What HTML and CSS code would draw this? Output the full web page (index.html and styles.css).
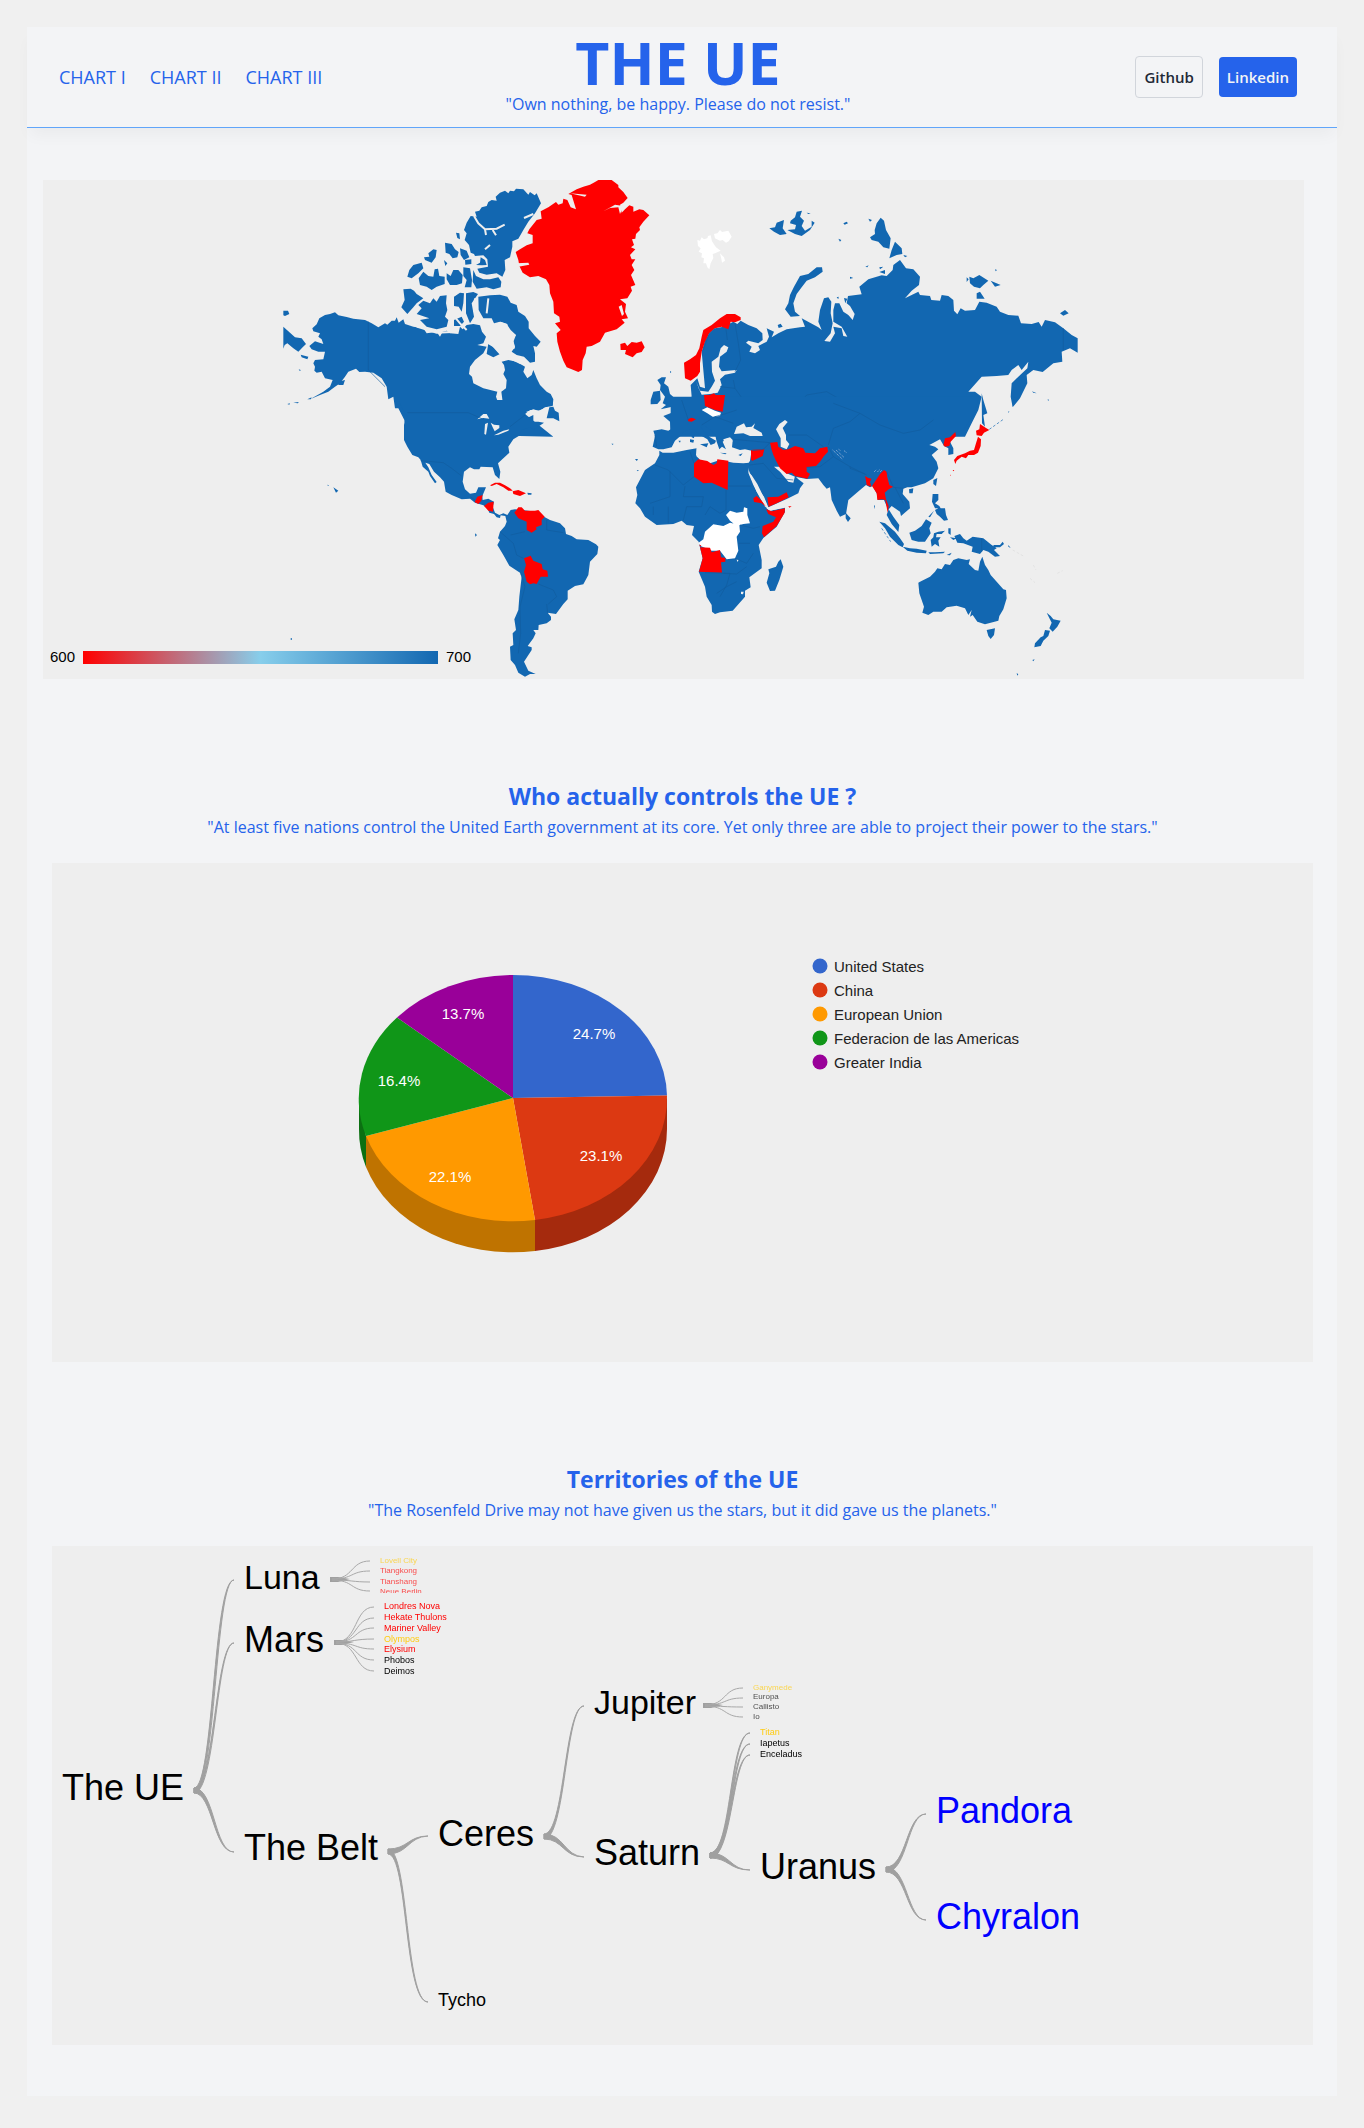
FILE: index.html
```html
<!DOCTYPE html>
<html lang="en">
<head>
<meta charset="utf-8">
<meta name="viewport" content="width=device-width, initial-scale=1">
<title>The UE</title>
<link rel="stylesheet" href="styles.css">
</head>
<body>
<div class="page">
  <header class="header">
    <nav class="nav">
      <a href="#chart1">CHART I</a>
      <a href="#chart2">CHART II</a>
      <a href="#chart3">CHART III</a>
    </nav>
    <div class="brand">
      <h1>THE UE</h1>
      <p class="quote">"Own nothing, be happy. Please do not resist."</p>
    </div>
    <div class="actions">
      <button type="button" class="btn btn-outline">Github</button>
      <button type="button" class="btn btn-solid">Linkedin</button>
    </div>
  </header>

  <main>
    <section class="map-section" id="chart1">
      <div class="panel map-panel">
        <svg class="chart" viewBox="-681 30 3783 1497" role="img" aria-label="World map">
          <!-- North America, Arctic -->
          <g class="land">
            <path d="M813,100 800,70 794,76 780,66 775,74 760,58 738,56 732,64 720,62 715,70 705,62 690,68 677,80 680,92 665,90 655,96 650,108 635,112 628,122 615,125 620,140 602,138 590,158 582,180 590,190 584,210 597,225 602,248 612,252 615,258 640,256 652,268 654,290 622,296 628,308 650,314 680,310 697,320 706,300 704,270 720,262 727,230 727,214 745,206 760,180 775,155 795,130Z"/>
            <path d="M610,300 618,318 640,328 660,328 685,322 694,335 692,352 670,358 650,352 620,356 608,335Z"/>
            <path d="M525,218 545,222 555,238 566,246 562,262 548,265 538,252 527,248ZM570,235 590,242 598,262 582,270 572,255ZM558,188 568,190 570,208 562,204ZM475,250 490,238 500,240 497,262 485,278 465,270 462,262 478,260ZM430,285 455,278 460,295 445,310 425,325 412,320 418,300ZM446,325 460,305 475,318 490,320 494,298 504,296 508,318 524,320 524,342 500,350 485,360 470,350 450,345ZM530,310 542,318 550,300 565,300 578,315 576,340 560,345 540,345 530,328ZM580,292 600,295 606,330 604,352 584,352 590,330 580,318ZM585,270 604,268 604,282 586,284ZM632,262 645,270 650,285 636,286 618,285 630,278ZM522,270 532,280 526,288Z"/>
            <path d="M400,358 422,356 432,362 440,372 460,385 440,400 430,412 412,432 394,412 404,390Z"/>
            <path d="M460,392 480,400 490,385 500,395 510,378 530,376 528,400 532,420 525,440 535,450 530,470 500,478 470,470 450,450 478,445 440,432 455,415 445,405ZM552,380 570,368 582,370 580,400 575,425 566,410 552,408ZM588,370 610,366 624,372 605,400 612,440 600,460 588,430ZM552,450 575,440 582,455 570,468 552,468Z"/>
            <path d="M625,380 660,376 690,374 712,380 722,398 740,405 745,425 765,438 776,455 776,475 795,498 812,515 800,530 790,528 795,550 795,575 780,578 762,560 740,555 725,545 735,530 728,505 738,495 722,480 710,462 690,455 672,460 665,445 640,445 626,420Z"/>
            <path d="M655,520 675,535 690,552 670,562 650,552ZM40,422 54,422 58,432 45,438 40,436ZM40,470 60,488 75,502 95,505 108,522 98,532 85,545 70,535 52,520 44,525 40,536ZM92,554 115,560 112,568 95,562ZM205,635 225,630 220,645 205,645ZM86,598 92,600 90,604ZM52,702 60,700 58,704ZM70,698 86,696 84,700ZM112,688 125,682 122,688Z"/>
            <path d="M127,475 140,463 148,445 165,435 180,432 195,427 205,436 230,441 250,446 285,450 305,460 325,472 345,460 352,464 365,452 375,452 380,442 386,458 400,448 405,462 430,470 460,475 470,490 500,486 510,500 518,485 530,482 540,490 565,492 570,470 578,478 590,465 610,462 630,466 636,485 648,500 640,520 622,525 650,530 640,550 615,570 600,590 597,612 606,620 610,640 640,655 670,662 682,665 678,680 685,700 692,705 698,695 694,665 708,655 710,630 700,612 705,600 702,585 695,575 715,570 740,575 765,590 760,605 772,625 785,615 790,600 800,625 810,645 830,665 842,672 850,688 848,708 825,712 810,722 780,720 765,732 850,800 405,790 403,750 385,715 375,715 370,680 355,688 350,650 335,625 310,608 285,605 268,606 258,596 235,605 225,620 210,640 195,650 175,665 150,675 120,688 160,665 180,650 188,630 165,625 155,605 140,608 133,602 135,590 130,580 135,570 160,568 165,545 145,545 125,538 118,528 135,514 160,522 155,508 145,500 150,490 130,484Z"/>
          </g>
          <g class="water">
            <path class="channel" d="M612,138 625,160 645,178 680,176 704,164M645,178 648,195M668,180 678,196M660,225 645,238M762,144 790,132"/>
            <path class="channel" d="M560,370 535,385 545,430 570,460 590,480M615,385 612,420 625,450 645,465 648,495M440,470 500,488 560,485M655,385 650,430"/>
            <path d="M675,462 692,455 712,462 715,485 738,495 730,515 735,535 715,545 695,560 668,530 650,520 680,505Z"/>
            <path d="M700,558 760,572 790,588 750,582Z"/>
          </g>

          <!-- Greenland and Iceland -->
          <g class="low">
            <path d="M737,246 750,238 770,226 788,220 788,195 772,190 778,178 800,150 815,146 812,124 835,112 858,96 865,104 878,100 880,86 892,90 902,112 918,118 905,75 895,72 920,58 940,50 960,44 975,36 985,30 1025,30 1045,45 1045,52 1060,66 1073,84 1060,98 1050,104 1055,128 1065,118 1078,106 1090,110 1090,125 1108,118 1120,120 1138,136 1120,155 1108,172 1110,180 1098,192 1096,206 1086,208 1092,225 1083,232 1096,238 1080,255 1085,268 1096,268 1085,285 1093,300 1083,315 1096,345 1082,350 1086,362 1072,385 1050,388 1068,402 1065,425 1074,445 1055,448 1064,458 1040,478 1005,488 990,515 965,528 950,530 947,550 938,570 936,600 925,606 905,598 890,592 880,572 870,545 862,515 860,490 872,480 855,460 870,455 868,440 852,430 850,395 840,370 838,345 828,328 805,318 780,322 758,308 748,288 745,270Z"/>
            <path d="M1051,522 1065,518 1072,528 1085,516 1100,518 1115,514 1124,532 1115,546 1100,550 1088,562 1065,552 1068,540 1052,540Z"/>
          </g>
          <g class="water">
            <path d="M900,70 950,74 945,80ZM1000,124 1035,104 1060,108 1050,132 1045,112 1020,114ZM740,280 775,278 778,284 745,290ZM1046,410 1055,405 1062,432 1056,438Z"/>
          </g>

          <!-- Americas south of Canada -->
          <g transform="translate(0 690)">
            <path class="land" d="M385,0 404,40 412,48 402,75 402,120 412,140 427,165 445,172 452,180 458,200 475,215 480,228 495,250 500,246 485,225 475,202 466,188 478,192 492,215 510,232 522,245 527,275 545,285 575,298 600,296 615,308 640,316 652,324 658,338 672,342 680,352 690,354 692,346 706,348 710,365 705,378 690,395 684,415 690,420 682,435 700,465 718,497 750,518 755,530 748,590 745,630 733,658 738,690 728,700 730,735 720,740 722,780 735,795 745,818 765,830 780,822 797,822 775,812 762,785 785,750 785,742 773,738 790,715 797,700 790,690 805,690 806,675 830,670 843,660 843,650 833,638 858,642 880,612 893,598 893,572 915,558 940,553 955,525 960,485 982,462 985,440 978,433 955,420 920,418 905,408 888,402 885,385 870,370 840,360 822,350 800,335 755,330 735,328 722,330 712,345 700,340 688,345 675,338 668,320 672,305 655,296 638,300 637,288 648,262 625,262 618,278 600,281 585,268 578,245 582,215 600,202 612,208 628,208 632,200 668,202 675,225 688,237 691,215 684,190 700,175 718,158 715,140 730,118 750,106 755,90 780,82 790,90 822,68 805,65 790,65 790,45 770,55 765,40 785,28 848,15 848,0Z"/>
            <path class="land" d="M838,22 850,20 855,32 866,38 868,64 850,55 830,55ZM772,278 785,280 784,284 774,284ZM615,400 621,405 616,410ZM190,262 205,272 198,278ZM172,254 177,256 174,258ZM62,715 66,715 66,719 62,719ZM1024,131 1030,131 1029,135ZM1096,178 1103,178 1101,182Z"/>
            <path class="water" d="M622,58 640,42 650,42 658,56 640,54ZM645,72 654,68 648,104 643,102ZM662,68 672,74 688,76 688,84 674,94 668,82ZM672,106 700,92 718,88 715,92 685,104ZM768,36 790,28 805,32 835,20 832,40 820,50 812,60 802,56 795,46Z"/>
            <path class="low" d="M660,256 675,248 690,248 705,256 722,266 728,272 715,272 700,262 680,252 665,258ZM728,274 745,270 768,280 750,288 730,282ZM614,306 622,290 638,285 634,302 625,312ZM642,318 655,308 671,305 669,335 655,332ZM733,338 745,322 755,322 765,332 795,332 805,330 824,350 815,360 815,375 798,382 800,388 785,398 770,390 770,365 745,355ZM762,475 782,467 790,482 815,492 818,508 832,512 834,530 812,530 800,552 790,550 780,553 770,545 762,515 768,495Z"/>
            <path class="borders" d="M412,38H595L640,58M452,182 520,188 545,205 575,228M720,80 765,45M690,395 730,430M730,430 740,465 760,475M722,405 765,395M752,520 765,560 750,620 752,700 745,760M805,552 850,570 860,590 835,612M830,612 833,640M830,360V390L880,398M600,290 615,300"/>
          </g>
          <path class="borders" d="M295,455V600L345,650"/>

          <!-- Northern Eurasia -->
          <g transform="translate(1050 0)">
            <g class="land">
              <path d="M245,545 255,510 268,490 285,475 310,470 340,455 352,462 362,452 385,465 410,475 427,490 428,510 415,520 385,512 378,518 395,530 388,545 405,550 420,540 415,528 440,515 447,500 440,475 462,485 455,502 475,490 500,478 540,472 555,470 545,445 570,458 595,472 605,480 595,455 600,420 612,385 625,382 634,395 632,430 638,460 632,490 613,513 630,515 645,490 640,470 665,475 670,498 682,500 665,470 640,455 640,420 645,400 658,400 670,425 685,435 698,450 704,432 690,408 680,400 684,378 725,373 718,350 745,328 785,316 800,318 818,300 820,285 840,270 858,295 880,298 900,320 897,345 875,362 855,385 895,365 900,375 930,378 934,390 960,392 965,375 985,378 1000,390 1002,422 1012,433 1022,415 1035,422 1065,420 1078,395 1100,398 1130,410 1140,425 1165,435 1195,437 1203,460 1235,462 1256,456 1265,470 1275,450 1305,457 1330,475 1355,495 1373,505 1373,548 1350,535 1325,545 1327,575 1300,580 1268,606 1240,600 1220,615 1222,640 1200,685 1178,712 1172,680 1175,640 1195,620 1222,595 1225,575 1205,600 1195,585 1175,600 1165,615 1130,618 1085,620 1045,665 1065,665 1085,680 1075,720 1055,760 1035,800 H152 L150,755 130,738 155,728 175,712 188,688 215,680 212,645 232,625 240,650 255,655Z"/>
              <path d="M512,440 495,418 505,400 510,375 522,350 540,318 565,312 590,292 606,292 608,305 585,322 560,332 545,352 530,372 520,400 525,425 540,438Z"/>
              <path d="M448,175 465,172 470,158 492,150 488,175 500,192 480,195 462,185ZM512,152 525,142 530,125 546,122 540,140 552,152 545,168 555,182 575,170 575,152 584,158 570,180 545,198 525,192 502,180 525,178 528,165 510,160ZM560,128 572,130 565,132ZM670,160 680,155 684,160 674,164ZM655,206 664,210 660,215ZM745,146 756,150 750,155ZM764,180 770,160 782,143 792,152 798,180 812,205 808,236 790,232 775,215 755,210 750,202 765,192ZM808,265 815,240 825,215 845,235 847,252 830,255ZM850,255 862,258 855,262ZM736,290 746,286 742,292ZM778,292 790,290 780,298ZM690,320 700,324 690,326ZM778,306 795,300 795,312ZM1048,320 1060,325 1078,315 1105,332 1090,345 1080,355 1062,350 1050,340ZM1112,332 1142,345 1125,350ZM1070,370 1080,365 1094,386 1070,386ZM1125,298 1131,300 1127,304ZM1040,322 1046,328 1040,336ZM1320,430 1335,420 1346,430 1330,437ZM473,465 482,461 488,470 476,474ZM1085,670 1090,690 1102,730 1090,735 1095,770 1086,760ZM1236,664 1250,670 1240,668ZM1283,688 1288,690 1284,692ZM310,620 318,625 315,640 308,635ZM650,382 656,380 655,388ZM672,384 682,386 676,400Z"/>
              <path d="M112,630 125,622 138,622 132,640 145,650 150,672 168,688 165,708 150,712 122,718 138,705 128,700 135,680 120,660 122,645ZM92,690 100,665 120,662 122,690 112,702 92,703ZM150,602 154,606 151,610Z"/>
            </g>
            <path class="water" d="M228,632 240,662 265,665 275,650 285,632 276,605 275,575 295,560 302,535 312,525 325,532 320,545 300,560 297,590 305,604 350,600 345,608 315,614 300,628 305,645 293,668 270,672 245,674 236,655Z"/>
            <path class="low" d="M192,578 210,568 228,555 238,535 245,500 250,480 275,465 300,445 320,432 345,432 362,442 362,450 345,457 332,455 325,478 305,470 285,475 268,490 255,515 245,545 240,580 240,605 232,618 212,632 195,625ZM252,682 282,670 290,677 315,676 316,700 308,725 285,720 255,708ZM203,748 215,743 228,750 215,755 205,754Z"/>
            <path class="blank" d="M242,720 262,712 285,722 303,728 300,738 278,740 262,730ZM232,210 240,212 245,202 252,208 262,205 264,198 272,196 276,214 288,232 302,242 285,250 278,252 280,264 272,280 268,298 262,292 258,280 250,280 252,265 244,262 246,250 236,245 242,235 234,228ZM282,192 292,190 300,180 306,186 325,182 335,200 326,214 318,218 308,210 300,212 285,205ZM300,250 312,262 315,272 306,278 304,266Z"/>
            <path class="borders" d="M285,475 268,490 250,540M318,478 322,510M345,460 355,520 362,570 345,605M300,650 345,655 370,690 415,720 410,745M465,745 480,715 530,710 560,675 620,665 655,685 700,705 730,725 800,705 850,715 905,720 940,725 945,685 975,695 1000,735 1035,745M730,725 760,755 820,775M190,690 185,750M345,655 340,630M1330,475V540M465,715 470,745"/>
          </g>

          <!-- Southern Europe, Asia, Africa, Oceania -->
          <g transform="translate(1050 690)">
            <g class="land">
              <path d="M152,-10V88L145,92 125,88 100,92 105,108 98,140 115,148 130,148 155,142 165,122 185,105 190,95 205,90 222,88 235,102 262,118 272,135 285,130 288,122 270,112 255,98 242,80 250,75 265,85 285,102 290,125 298,148 306,140 318,148 308,125 322,115 338,122 336,142 360,150 375,148 395,152 390,182 382,195 388,215 410,260 432,290 445,322 505,295 535,280 540,265 551,250 535,238 525,228 520,248 505,245 480,215 462,200 480,200 500,220 525,230 560,237 595,235 610,255 620,266 630,262 635,300 650,332 660,350 678,342 685,300 720,270 738,255 750,262 758,258 770,280 774,300 792,300 805,330 800,345 815,372 835,396 838,375 820,350 806,328 815,318 840,335 843,348 870,325 868,305 848,282 850,266 862,262 875,262 915,250 940,235 955,205 950,185 935,165 955,148 945,140 928,135 960,118 972,138 985,145 985,165 1000,162 1000,145 990,125 1005,100 1030,90 1060,45 1078,-10Z"/>
              <path d="M118,152 128,158 160,158 200,150 230,145 228,165 240,180 270,190 300,180 340,188 370,190 388,188 385,215 400,250 410,275 430,305 440,325 450,332 495,323 495,335 470,380 430,414 416,435 425,480 425,505 388,532 392,562 375,572 375,590 338,632 300,637 285,642 276,635 275,615 260,590 255,560 236,515 248,475 236,425 216,405 222,378 200,375 185,362 160,372 110,375 75,350 60,325 46,310 52,285 48,262 75,210 105,190 118,165Z"/>
              <path d="M482,478 490,500 478,540 465,572 450,573 440,548 448,520 445,508 468,500 475,485ZM677,338 692,355 684,366 677,355ZM762,318 765,315 764,328ZM778,365 795,370 825,395 840,415 852,432 848,442 835,435 810,410 795,385ZM848,440 870,445 890,446 920,452 918,460 890,458 862,452ZM925,457 945,457 975,455 970,460 930,462ZM868,398 885,392 905,378 918,358 935,368 928,385 932,400 915,425 895,425 875,420ZM942,400 955,395 975,392 965,402 950,402 948,412 962,412 955,422 958,440 945,432 935,440 932,420 940,412ZM985,385 992,385 992,405 985,400ZM990,412 1010,415 1000,420ZM1003,408 1020,402 1030,415 1040,422 1058,410 1090,415 1115,435 1130,445 1122,450 1140,468 1125,470 1105,455 1090,450 1080,462 1055,455 1058,440 1030,430 1012,428ZM1120,435 1140,435 1148,425 1152,432 1140,442 1122,442ZM1165,435 1172,444 1165,440ZM980,465 995,458 990,466ZM938,282 955,282 955,300 945,310 958,318 962,325 945,325 936,305ZM945,330 955,325 975,325 978,345 984,360 972,362 960,350 950,342ZM925,350 942,332 930,352ZM940,240 952,234 948,258 940,252ZM867,268 880,265 878,280 868,280ZM978,110 984,112 980,118Z"/>
              <path d="M895,548 900,545 930,530 945,515 952,505 965,508 975,492 990,495 1000,480 1015,475 1040,480 1050,478 1046,492 1065,510 1075,512 1080,485 1087,470 1095,495 1105,510 1112,525 1130,545 1150,568 1158,570 1160,595 1150,628 1138,648 1135,662 1095,673 1072,665 1058,645 1050,650 1055,630 1045,645 1035,625 1010,617 980,622 965,635 940,635 925,645 907,638 912,620 898,580ZM1100,690 1125,685 1122,705 1112,717 1105,708ZM1280,638 1292,648 1300,658 1322,662 1312,680 1298,695 1288,685 1295,668ZM1275,690 1290,692 1285,708 1270,722 1262,738 1243,742 1245,730 1262,712 1270,708ZM1237,780 1244,778 1240,784ZM1190,820 1195,822 1192,827ZM1180,-10 1192,-5 1190,5 1178,18ZM1165,35 1168,32 1166,40ZM45,177 54,178 50,182ZM50,210 56,210 54,214Z"/>
              <path d="M210,118 222,120 220,128 210,126ZM215,95 224,98 222,115 215,112ZM175,122 182,122 180,128ZM240,133 265,130 260,142ZM300,158 320,160 316,163ZM355,165 368,160 362,168Z"/>
            </g>
            <path class="water" d="M342,102 350,80 372,70 378,82 395,80 405,70 400,84 425,98 428,108 390,108 370,100ZM478,72 495,60 503,66 488,84 498,105 498,120 508,132 500,148 482,140 482,115 468,88ZM384,216 395,226 412,252 428,285 442,318 436,322 418,290 400,255ZM310,118 330,112 338,120 330,148 318,145ZM440,325 475,315 495,322 450,332ZM350,478 356,480 352,486ZM363,575 371,575 369,583 363,582ZM230,145 240,142 238,175 230,170Z"/>
            <path class="blank" d="M255,395 280,373 310,378 330,368 358,375 360,395 350,410 355,452 345,475 320,478 300,452 275,452 240,437 236,428 250,418ZM318,345 330,332 350,338 370,335 372,322 382,325 382,345 390,370 370,372 350,378 330,362ZM245,30 262,22 285,32 303,38 300,48 278,50 262,40Z"/>
            <g class="low">
              <path d="M222,190 235,178 262,183 280,195 290,190 292,178 325,182 323,270 275,248 250,250 222,230ZM240,442 270,443 275,457 300,450 303,472 316,474 316,485 303,487 306,518 237,515 248,475ZM238,434 244,436 240,440ZM252,-15 315,-15 308,35 285,30 255,18ZM203,58 215,53 228,58 215,65 205,64ZM393,150 420,148 433,148 428,168 398,182 393,180ZM450,128 472,126 475,140 490,150 505,148 525,138 550,145 556,158 585,160 600,145 622,140 624,155 612,168 600,185 588,198 560,202 560,215 570,222 562,236 525,228 515,218 500,222 480,205 468,182 460,165 455,150ZM400,295 410,288 425,302 438,320 425,310 402,306ZM442,292 475,290 500,277 506,292 470,310 446,320ZM438,328 455,334 495,325 494,338 470,378 432,412 426,400 428,378 460,365 468,352 445,342ZM505,319 515,319 508,323Z"/>
              <path d="M735,228 745,234 755,236 750,245 754,260 740,255 738,242ZM756,258 768,240 780,222 792,210 800,215 802,232 808,255 820,260 806,268 794,278 798,298 806,318 803,338 796,300 786,298 772,300 770,280ZM970,135 975,115 990,112 1006,96 1008,108 992,125 988,138 975,140ZM1080,72 1098,84 1108,90 1092,98 1085,108 1070,106 1068,92 1078,88ZM1074,110 1083,118 1082,138 1074,158 1062,165 1045,165 1038,175 1025,170 1010,182 1006,192 1002,180 1012,168 1035,160 1050,152 1062,150 1068,130ZM998,210 1003,210 1000,214ZM990,225 993,224 990,228Z"/>
            </g>
            <path class="hatch" d="M638,150 668,178M648,150 672,172M656,148 662,152M762,216 770,208M772,216 780,208M780,216 786,210M672,152 680,158"/>
            <path class="islands" d="M1178,450 1210,468M1240,495 1248,510M1230,535 1245,548M1312,520 1328,512"/>
            <path class="islands chain" d="M1108,88 1150,58M785,385 812,425"/>
            <path class="borders" d="M105,195 145,210 190,255 222,230M210,155 222,190M325,258H395M318,270V330L300,340 270,320 255,345M195,258 190,290 250,290M150,215V290L90,310M250,290 245,320 200,320 190,360M145,320V370M100,320V345M360,375 400,385 420,380M355,430 390,430M345,475 380,490 400,460M310,520 350,522 380,500M255,518 330,520 320,555 300,590M350,545 320,560 290,580M388,195 430,190 470,235 520,240M395,152 430,148 450,128M340,118 450,128M505,105 560,105 610,140M560,202 600,200 640,170 625,140M640,170 690,200 740,225M690,200V205L735,222M720,40 690,65 640,85 625,135M720,40 780,75 850,100 900,90 940,60M800,215 820,262 850,265M825,262 850,310M640,10 720,40M185,0 205,60M245,75 285,50 340,70M285,50 320,40 350,30M105,105 110,140M1085,415V455"/>
          </g>
        </svg>
        <div class="map-legend">
          <span>600</span><span class="ramp"></span><span>700</span>
        </div>
      </div>
    </section>

    <section class="section" id="chart2">
      <h2>Who actually controls the UE ?</h2>
      <p class="quote">"At least five nations control the United Earth government at its core. Yet only three are able to project their power to the stars."</p>
      <div class="panel">
        <svg class="chart pie" viewBox="52 863 1261 499" role="img" aria-label="Share of control">
          <path fill="#a52a0d" d="M667,1098V1129A154,123 0 0 1 535,1251V1220Z"/>
          <path fill="#bf7300" d="M535,1220V1251A154,123 0 0 1 366,1167V1136Z"/>
          <path fill="#0c7012" d="M359,1098V1129A154,123 0 0 0 366,1167V1136Z"/>
          <path fill="#36c" d="M513,1098V975A154,123 0 0 1 667,1095.500Z"/>
          <path fill="#dc3912" d="M513,1098 667,1095.500A154,123 0 0 1 535,1220Z"/>
          <path fill="#f90" d="M513,1098 535,1220A154,123 0 0 1 366,1136Z"/>
          <path fill="#109618" d="M513,1098 366,1136A154,123 0 0 1 397,1017.500Z"/>
          <path fill="#909" d="M513,1098 397,1017.500A154,123 0 0 1 513,975Z"/>
          <g class="slice-label">
            <text x="594" y="1039">24.7%</text><text x="601" y="1161">23.1%</text><text x="450" y="1182">22.1%</text><text x="399" y="1086">16.4%</text><text x="463" y="1019">13.7%</text>
          </g>
          <circle cx="820" cy="966" r="7.500" fill="#36c"/><text x="834" y="972">United States</text>
          <circle cx="820" cy="990" r="7.500" fill="#dc3912"/><text x="834" y="996">China</text>
          <circle cx="820" cy="1014" r="7.500" fill="#f90"/><text x="834" y="1020">European Union</text>
          <circle cx="820" cy="1038" r="7.500" fill="#109618"/><text x="834" y="1044">Federacion de las Americas</text>
          <circle cx="820" cy="1062" r="7.500" fill="#909"/><text x="834" y="1068">Greater India</text>
        </svg>
      </div>
    </section>

    <section class="section" id="chart3">
      <h2>Territories of the UE</h2>
      <p class="quote">"The Rosenfeld Drive may not have given us the stars, but it did gave us the planets."</p>
      <div class="panel">
        <svg class="chart tree" viewBox="52 1546 1261 499" role="img" aria-label="Territory tree">
          <g class="branch">
            <path d="M194,1788C214,1788 213,1580 234,1580C215,1580 216,1793 194,1793Z"/>
            <path d="M194,1788C215,1788 215,1643 234,1643C216,1643 216,1793 194,1793Z"/>
            <path d="M194,1788C215,1788 214,1852 234,1852C213,1852 213,1793 194,1793Z"/>
            <path d="M388,1849C408,1849 408,1836 428,1836C408,1837 408,1854 388,1854Z"/>
            <path d="M388,1849C409,1849 405,2002 428,2002C404,2002 408,1854 388,1854Z"/>
            <path d="M544,1834C565,1834 564,1706 584,1706C565,1706 566,1839 544,1839Z"/>
            <path d="M544,1834C564,1834 564,1856 584,1857C563,1857 563,1839 544,1839Z"/>
            <path d="M710,1853C732,1853 729,1733 750,1733C730,1733 733,1858 710,1858Z"/>
            <path d="M710,1853C732,1853 730,1744 750,1744C731,1744 733,1858 710,1858Z"/>
            <path d="M710,1853C732,1853 731,1755 750,1755C732,1755 733,1858 710,1858Z"/>
            <path d="M710,1853C730,1853 730,1870 750,1870C729,1870 729,1858 710,1858Z"/>
            <path d="M886,1867C907,1867 906,1814 926,1814C907,1814 908,1872 886,1872Z"/>
            <path d="M886,1867C908,1867 907,1920 926,1920C906,1920 907,1872 886,1872Z"/>
          </g>
          <g class="hub">
            <path d="M330,1577H338L350,1579 338,1582H330ZM334,1640H342L354,1642 342,1645H334ZM703,1703H711L723,1705 711,1708H703Z"/>
          </g>
          <g class="twig">
            <path d="M332,1579C354,1579 350,1561 370,1561M332,1579C354,1579 350,1571 370,1571M332,1580C352,1580 352,1582 370,1582M332,1580C354,1580 350,1591 370,1591"/>
            <path d="M336,1642C358,1642 354,1607 374,1607M336,1642C358,1642 354,1618 374,1618M336,1642C358,1642 354,1628 374,1628M336,1642C354,1642 354,1639 374,1639M336,1643C358,1643 354,1649 374,1649M336,1643C358,1643 354,1660 374,1660M336,1643C358,1643 354,1671 374,1671"/>
            <path d="M705,1705C727,1705 723,1688 743,1688M705,1705C727,1705 723,1698 743,1698M705,1706C725,1706 723,1707 743,1707M705,1706C727,1706 723,1717 743,1717"/>
          </g>
          <g class="node">
            <text x="62" y="1800">The UE</text>
            <text class="mid" x="244" y="1589">Luna</text>
            <text x="244" y="1652">Mars</text>
            <text x="244" y="1860">The Belt</text>
            <text x="438" y="1846">Ceres</text>
            <text class="mid" x="594" y="1714">Jupiter</text>
            <text x="594" y="1865">Saturn</text>
            <text x="760" y="1879">Uranus</text>
            <text class="star" x="936" y="1823">Pandora</text>
            <text class="star" x="936" y="1929">Chyralon</text>
          </g>
          <text class="minor" x="438" y="2006">Tycho</text>
          <g class="leaf faded">
            <text class="gold" x="380" y="1563">Lovell City</text>
            <text class="red" x="380" y="1573">Tiangkong</text>
            <text class="red" x="380" y="1584">Tianshang</text>
            <svg x="380" y="1585" width="60" height="8"><text class="red" x="0" y="9">Neue Berlin</text></svg>
            <text class="gold" x="753" y="1690">Ganymede</text>
            <text x="753" y="1699">Europa</text>
            <text x="753" y="1709">Callisto</text>
            <text x="753" y="1719">Io</text>
          </g>
          <g class="leaf">
            <text class="red" x="384" y="1609">Londres Nova</text>
            <text class="red" x="384" y="1620">Hekate Thulons</text>
            <text class="red" x="384" y="1631">Mariner Valley</text>
            <text class="gold" x="384" y="1642">Olympos</text>
            <text class="red" x="384" y="1652">Elysium</text>
            <text x="384" y="1663">Phobos</text>
            <text x="384" y="1674">Deimos</text>
            <text class="gold" x="760" y="1735">Titan</text>
            <text x="760" y="1746">Iapetus</text>
            <text x="760" y="1757">Enceladus</text>
          </g>
        </svg>
      </div>
    </section>
  </main>
</div>
</body>
</html>
```
FILE: styles.css
```css
* {
  box-sizing: border-box;
}

body {
  margin: 0;
  padding: 27px 27px 32px;
  background: #f0f0f0;
  color: #2563eb;
  font-family: "Open Sans", "Noto Sans", sans-serif;
  font-size: 16px;
  line-height: 24px;
}

h1,
h2,
p {
  margin: 0;
}

.page {
  background: #f3f4f6;
  padding-bottom: 51px;
}

.header {
  display: flex;
  align-items: center;
  height: 101px;
  padding: 0 40px 0 22px;
  border-bottom: 1px solid #60a5fa;
  box-shadow: 0 10px 15px -3px rgba(0, 0, 0, 0.04);
}

.nav {
  display: flex;
  flex: 1;
  gap: 24px;
  padding-left: 10px;
  font-size: 18px;
  font-weight: 500;
}

.nav a {
  color: inherit;
  text-decoration: none;
}

.brand {
  padding-bottom: 6px;
  text-align: center;
}

.brand h1 {
  font-size: 59px;
  font-weight: 700;
  line-height: 60px;
}

.quote {
  font-weight: 500;
}

.actions {
  display: flex;
  flex: 1;
  align-items: center;
  justify-content: flex-end;
  gap: 16px;
}

.btn {
  padding: 0 8px;
  height: 40px;
  border: 0;
  border-radius: 4px;
  font: inherit;
  font-size: 15px;
  font-weight: 600;
}

.btn-outline {
  height: 42px;
  border: 1px solid #d1d5db;
  background: transparent;
  color: #1f2937;
}

.btn-solid {
  background: #2563eb;
  color: #f3f4f6;
}

.map-section {
  padding: 52px 33px 0 16px;
}

.section {
  padding: 104px 24px 0 25px;
  text-align: center;
}

.section h2 {
  margin-bottom: 6px;
  font-size: 23px;
  font-weight: 700;
  line-height: 26px;
}

.section .panel {
  margin-top: 24px;
}

.panel {
  position: relative;
  background: #eee;
}

.chart {
  display: block;
  width: 100%;
  height: auto;
  font-family: "Liberation Sans", Arial, sans-serif;
}

.land {
  fill: #1267b1;
}

.low {
  fill: #f00;
}

.blank {
  fill: #fff;
}

.water {
  fill: #eee;
}

.channel,
.hatch,
.islands,
.borders {
  fill: none;
}

.channel {
  stroke: #eee;
  stroke-width: 6px;
}

.hatch {
  stroke: #dde;
  stroke-width: 2px;
  stroke-dasharray: 3 3;
}

.islands {
  stroke: #ddd;
  stroke-width: 2px;
  stroke-dasharray: 8 6;
}

.chain {
  stroke: #1267b1;
}

.borders {
  stroke: #105c9f;
  stroke-width: 2px;
}

.map-legend {
  position: absolute;
  left: 7px;
  bottom: 10px;
  display: flex;
  align-items: center;
  gap: 8px;
  color: #000;
  font-family: "Liberation Sans", Arial, sans-serif;
  font-size: 15px;
}

.ramp {
  width: 355px;
  height: 13px;
  background: linear-gradient(90deg, #f00, #87ceeb, #1267b1);
}

.pie {
  font-size: 15px;
  fill: #222;
}

.slice-label {
  fill: #fff;
  text-anchor: middle;
}

.branch {
  fill: #a0a0a0;
  stroke: #a0a0a0;
  stroke-width: 1px;
}

.hub {
  fill: #a0a0a0;
}

.twig {
  fill: none;
  stroke: #a8a8a8;
  stroke-width: 1px;
}

.node {
  font-size: 36px;
}

.node .mid {
  font-size: 34px;
}

.tree {
  fill: #000;
}

.star {
  fill: #00f;
}

.minor {
  font-size: 18px;
}

.leaf {
  font-size: 9px;
}

.faded {
  font-size: 8px;
  opacity: 0.7;
}

.red {
  fill: #f00;
}

.gold {
  fill: #ffcc11;
}
```
